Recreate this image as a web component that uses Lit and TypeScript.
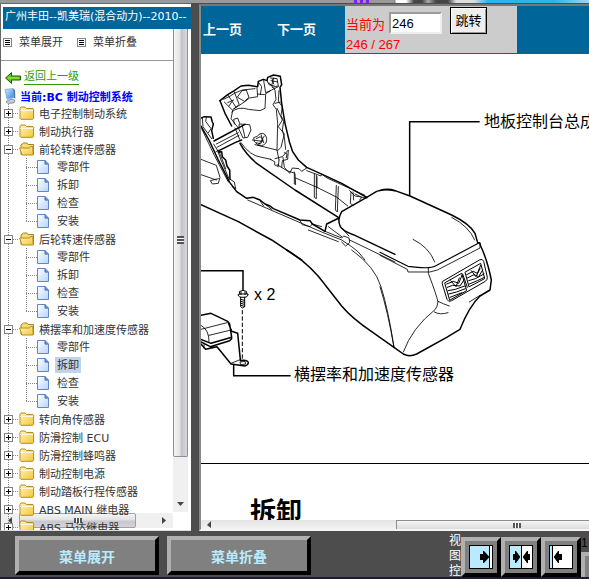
import { LitElement, html, svg, css, nothing } from "lit";
import { customElement, property, state } from "lit/decorators.js";
import { classMap } from "lit/directives/class-map.js";

interface Section {
  name: string;
  pages?: string[];
}

const PAGES = ["零部件", "拆卸", "检查", "安装"];

const SECTIONS: Section[] = [
  { name: "电子控制制动系统" },
  { name: "制动执行器" },
  { name: "前轮转速传感器", pages: PAGES },
  { name: "后轮转速传感器", pages: PAGES },
  { name: "横摆率和加速度传感器", pages: PAGES },
  { name: "转向角传感器" },
  { name: "防滑控制 ECU" },
  { name: "防滑控制蜂鸣器" },
  { name: "制动控制电源" },
  { name: "制动踏板行程传感器" },
  { name: "ABS MAIN 继电器" },
  { name: "ABS 马达继电器" },
];

const gradients = svg`
  <defs>
    <linearGradient id="gold" x1="0" y1="0" x2="1" y2="1">
      <stop offset="0" stop-color="#fff6b8" />
      <stop offset="1" stop-color="#f3c63c" />
    </linearGradient>
    <linearGradient id="sheet" x1="0" y1="0" x2="1" y2="1">
      <stop offset="0" stop-color="#ffffff" />
      <stop offset="1" stop-color="#b4d4fb" />
    </linearGradient>
    <linearGradient id="screen" x1="0" y1="0" x2="1" y2="1">
      <stop offset="0" stop-color="#cdeeff" />
      <stop offset="1" stop-color="#2f86e0" />
    </linearGradient>
  </defs>`;

const closedFolder = html`<svg class="folder" viewBox="0 0 16 14" aria-hidden="true">
  ${gradients}
  <path d="M1 12.5V2.5L2 1h4l1.5 1.5H14l.6.8v9.2l-.8.8H1.8z" fill="url(#gold)" stroke="#b98a1c" />
  <path d="M1.5 4.5h12.6" stroke="#fffbe0" />
</svg>`;

const openFolder = html`<svg class="folder" viewBox="0 0 16 14" aria-hidden="true">
  ${gradients}
  <path d="M2 12.5V3L4.5 1H8l1 1.5h5.5v10z" fill="#f7dc72" stroke="#a98322" />
  <path d="M3 13L.6 6h10l1-1.5h2.2L14.2 13z" fill="url(#gold)" stroke="#b98a1c" />
</svg>`;

const pageIcon = html`<svg class="sheet" viewBox="0 0 12 14" aria-hidden="true">
  ${gradients}
  <path d="M.5.5h7.6l3.4 3.4v9.6H.5z" fill="url(#sheet)" stroke="#6287c4" />
  <path d="M8 .5v3.6h3.5" fill="#6d96d8" stroke="#4a6eb0" />
</svg>`;

const consoleDrawing = html`<svg
  class="drawing"
  viewBox="201 54 600 409"
  role="img"
  aria-label="地板控制台总成 / 横摆率和加速度传感器"
>
  <g fill="none" stroke="#000" stroke-linejoin="round" stroke-linecap="round">
    <g transform="translate(195 60) scale(0.33333)">
      <g stroke-width="4.5">
        <path d="M75 122L98 104L118 92L138 78L160 76L188 80L190 64L205 58L216 62L218 52L236 45L256 49L260 74L255 82L260 130L270 190L283 245L293 275L310 300L335 322L390 347L440 370L515 412" />
        <path d="M75 122L90 160L110 198M135 250Q152 282 185 310L300 390L430 472" />
        <path d="M18 174L28 170L48 171L52 186L55 192L50 212L55 235M18 198L42 240L70 300L104 367L125 395L155 415" />
        <path d="M57 243L150 193M72 272L120 248L140 240" />
        <path d="M70 276L80 275L82 290L92 300L96 318L104 330L105 358" />
        <path d="M155 415L175 412L195 420L210 432L225 438L235 446L315 480L345 482L352 492L390 514" />
        <path d="M18 434L130 485L230 540L320 600" />
        <path d="M432 474L395 492L390 514M515 412L440 455Q426 480 436 500Q445 514 475 524L600 583" />
        <path d="M515 412L545 394Q565 386 600 392" />
      </g>
      <g stroke-width="2.5">
        <path d="M86 118L106 108L120 99L142 90L180 86M98 104L122 140M118 96L132 132M88 126L112 150M98 128L116 120M102 138L110 126" />
        <path d="M142 92L154 90L162 112L148 124L128 112ZM118 146L148 126L164 114L188 110L186 84M132 134L114 148L108 176L130 204" />
        <path d="M110 156Q130 138 160 148L195 152L210 145L212 104M188 102L208 104L230 90L250 80M190 66L200 80L196 104M206 62L212 98L226 92M216 62L222 74L238 78M226 54L246 56L250 78L232 82M232 58L236 72M228 62L248 66M236 54L230 76M222 68L240 90" />
        <path d="M240 92L243 118L234 134L244 148L248 190L246 270L252 300M252 92L250 124L262 140L258 166L266 184L262 210L268 232L272 268M240 130L256 126M246 145L262 180L250 200L268 222L258 262L248 272" />
        <path d="M134 192L164 194L168 210L158 232L144 234L132 208ZM120 204L134 238M64 252L130 218M66 262L132 226M142 198L150 232M118 192L116 178L128 174L134 190" />
        <path d="M188 228Q195 216 208 222Q220 234 212 250Q200 262 188 254Q174 246 176 234ZM184 236L196 230L204 240L196 252L184 248M198 224L206 248M172 240L202 244M180 254L245 270M208 228L190 256" />
        <path d="M138 248Q165 288 200 292L228 298M226 298L240 306L238 314L250 320M240 296L262 290L280 270L278 298L262 302L260 322M252 300L250 318M264 292L268 322L284 340L292 324L312 326L320 334L335 324M268 278L276 282L274 294" />
        <path d="M246 314L276 332L300 340L302 374L298 372L298 336M302 354L366 382L426 412L458 438M358 342V412L364 416V346M366 384V350M424 376L421 450L427 456L430 380M468 396L466 430L474 436M335 332L378 348L380 342L396 354L462 384L510 406M464 392L480 408L516 414M480 402L500 412L494 420M474 396L476 420" />
        <path d="M20 206L58 286L100 366M18 298L64 316L75 352L70 370L52 372L46 362L70 356M18 344L64 360M22 174L24 200L50 236M34 172L32 184L48 206L40 218M56 252L68 272L78 300L102 356M62 276L70 270L76 284L92 326" />
        <path d="M106 358L118 366L122 386L112 380M158 420L380 516L440 540L470 560Q490 572 510 600M390 514L440 534L446 528L462 534L464 548L452 558L440 546M352 492L380 500M315 482L322 494L345 500L352 492M196 424L206 438M212 434L230 448M440 504L462 528M464 540L600 606M400 500L440 530M340 510L430 545" />
      </g>
    </g>
    <g transform="translate(380 100) scale(0.33333)">
      <g stroke-width="4.5">
        <path d="M0 272Q22 264 45 272L90 288L215 345Q270 372 285 400L293 428L299 428L302 438Q322 480 334 540L330 570L300 588Q268 618 240 688L200 712L110 762Q88 772 70 762L42 742" />
        <path d="M0 457L84 499Q150 508 166 498L295 430" stroke-width="3.5" />
        <path d="M89 288V65H299" stroke-linecap="butt" stroke-linejoin="miter" />
      </g>
      <g stroke-width="2.5">
        <path d="M0 466L82 508L84 516H150L172 510L300 444V430M145 503V520Q170 586 174 606Q172 620 166 628Q96 684 70 756" />
        <path d="M215 352Q268 380 284 420M99 418Q148 442 164 486M174 604Q190 612 208 618M163 636Q180 646 204 638M268 606L300 586M0 560Q24 636 42 742" />
      </g>
      <g stroke-width="3">
        <path d="M188 544L300 479Q308 476 311 484L322 532Q322 540 316 544L215 602Q205 608 201 598L187 552ZM195 548L245 520L260 572L210 600ZM256 516L302 490L314 536L268 560Z" />
        <path d="M200 552L220 544L236 550L246 526M202 562L218 556L240 558L252 540M204 572L226 568L254 558M206 582L230 576L256 566M210 592L246 578M212 542L228 560L238 534M260 524L280 514L292 520L302 496M262 534L282 524L296 530L308 510M266 542L286 536L312 522M268 552L292 542L314 532M274 512L288 530L300 506M248 522L262 562" />
      </g>
    </g>
    <g transform="translate(195 250) scale(0.33333)">
      <g stroke-width="4.5">
        <path d="M275 0Q345 42 390 104L440 168Q470 204 530 245L597 292" />
        <path d="M18 62H144V120M116 342V377H287" stroke-linecap="butt" stroke-linejoin="miter" />
        <path d="M18 196L48 190L98 214L104 222L110 262L48 280L18 268M98 214L110 244L128 250L136 328M110 266L104 272L46 290L18 276M18 282L32 298L66 290L108 342L150 348Q164 342 158 334Q148 328 136 332" />
      </g>
      <g stroke-width="2.5">
        <path d="M18 238L96 218M18 226Q44 240 42 278M42 256L108 240M28 280L26 294M108 340L138 328M136 336L150 334L152 342L138 344Z" />
        <path d="M142 180V330" stroke-width="3" stroke-dasharray="13 6" stroke-linecap="butt" />
        <path d="M470 0Q540 50 558 110Q580 180 597 292" />
      </g>
      <g stroke-width="3" fill="#fff">
        <path d="M134 124Q144 118 154 124L156 132L160 134Q156 144 144 142Q130 142 129 134L133 132ZM137 142V170L142 174L149 170V142" />
        <path d="M138 126V134M150 126V134M133 132H156M137 148L149 151M137 154L149 157M137 160L149 163M137 166L149 169" fill="none" />
      </g>
    </g>
  </g>
  <text class="latin" x="254" y="300">x 2</text>
  <text class="label" x="484" y="127">地板控制台总成</text>
  <text class="label" x="294" y="380">横摆率和加速度传感器</text>
</svg>`;

@customElement("menu-tree")
export class MenuTree extends LitElement {
  @property({ attribute: false }) sections: Section[] = [];
  @state() private selected = "4-1";

  static styles = css`
    :host {
      display: block;
    }
    ul {
      list-style: none;
      margin: 0;
      padding: 0;
    }
    .tree {
      padding-left: 3px;
      background: repeating-linear-gradient(#888 0 1px, transparent 1px 2px) 7px 0 / 1px 100% no-repeat;
    }
    .row {
      display: flex;
      align-items: center;
      height: 18px;
    }
    .toggle {
      box-sizing: border-box;
      width: 9px;
      height: 9px;
      padding: 0;
      border: 1px solid #848484;
      background: #fff;
      display: block;
    }
    .toggle svg {
      display: block;
      width: 7px;
      height: 7px;
    }
    .dots {
      width: 6px;
      height: 1px;
      background: repeating-linear-gradient(90deg, #888 0 1px, transparent 1px 2px);
    }
    .folder {
      width: 16px;
      height: 14px;
      margin-right: 4px;
    }
    .sheet {
      width: 12px;
      height: 14px;
      margin-right: 6px;
    }
    .children {
      padding-left: 22px;
    }
    .child {
      background: repeating-linear-gradient(#888 0 1px, transparent 1px 2px) 0 0 / 1px 100% no-repeat;
    }
    .child:last-child {
      background-size: 1px 9px;
    }
    .child .dots {
      width: 11px;
    }
    a {
      color: #333;
      text-decoration: none;
      white-space: nowrap;
      line-height: 15px;
      padding-top: 2px;
    }
    .child a {
      padding: 2px 2px 0;
      line-height: 14px;
    }
    .selected {
      background: #c1d2ee;
    }
  `;

  private renderPage(page: string, key: string) {
    return html`<li class="row child">
      <span class="dots"></span>${pageIcon}
      <a
        href="#${key}"
        class=${classMap({ selected: this.selected === key })}
        @click=${() => (this.selected = key)}
        >${page}</a
      >
    </li>`;
  }

  render() {
    return html`<ul class="tree">
      ${this.sections.map(
        (s, i) => html`<li>
          <div class="row">
            <button class="toggle" aria-label=${s.name} aria-expanded=${s.pages ? "true" : "false"}>
              <svg viewBox="0 0 7 7">
                <path d=${s.pages ? "M1 3.5h5" : "M1 3.5h5M3.5 1v5"} stroke="#000" />
              </svg>
            </button>
            <span class="dots"></span>
            ${s.pages ? openFolder : closedFolder}
            <a href="#${i}">${s.name}</a>
          </div>
          ${s.pages
            ? html`<ul class="children">
                ${s.pages.map((p, j) => this.renderPage(p, `${i}-${j}`))}
              </ul>`
            : nothing}
        </li>`
      )}
    </ul>`;
  }
}

@customElement("app-root")
export class AppRoot extends LitElement {
  static styles = css`
    :host {
      display: grid;
      grid-template-columns: 191px 8px minmax(0, 1fr);
      grid-template-rows: 3px minmax(0, 1fr) 48px;
      height: 100vh;
      overflow: hidden;
      background: #4d4d4d;
      font: 11px "DejaVu Sans", "Noto Sans CJK SC", sans-serif;
      color: #333;
    }
    button,
    input {
      font-family: inherit;
      margin: 0;
    }
    .strip {
      grid-column: 1 / -1;
      display: flex;
      background: #999;
    }
    .strip .purple {
      width: 18px;
      margin-left: 354px;
      background: repeating-linear-gradient(90deg, #8a1cf0 0 3px, #999 3px 6px);
    }
    .strip .photo {
      flex: 1;
      margin-left: 22px;
      background: linear-gradient(90deg, #888 0 1px, #fff 2px 12px, #444 20px 28px, #aaa 34px, #444 42px 54px, #ddd 62px 80px, #2cb4e6 94px 160px, #9bd8ee);
    }

    .side {
      display: flex;
      flex-direction: column;
      min-height: 0;
      box-sizing: border-box;
      border-top: 1px solid #666;
      border-left: 1px solid #666;
      border-bottom: 1px solid #ddd;
      background: #fff;
    }
    .title {
      margin: 3px 0 0 2px;
      padding-left: 2px;
      height: 22px;
      line-height: 20px;
      background: #069;
      color: #fff;
      font-size: 11px;
      font-weight: 400;
      white-space: nowrap;
      overflow: hidden;
    }
    .side-body {
      flex: 1;
      min-height: 0;
      display: grid;
      grid-template-columns: minmax(0, 1fr) 15px;
      padding-right: 3px;
    }
    .menu {
      position: relative;
      isolation: isolate;
      min-height: 0;
      overflow: hidden;
    }
    .tools {
      display: flex;
      gap: 14px;
      height: 32px;
      border-bottom: 1px solid #999;
      box-sizing: border-box;
      padding-left: 2px;
    }
    .tool {
      display: flex;
      align-items: center;
      gap: 7px;
      height: 26px;
      padding: 0;
      border: 0;
      background: none;
      font-size: 11px;
      color: #333;
    }
    .tool svg {
      width: 9px;
      height: 9px;
      margin-top: 1px;
    }
    .tool span {
      margin-top: -2px;
    }
    .back {
      display: flex;
      align-items: center;
      gap: 3px;
      height: 20px;
      padding: 6px 0 0 4px;
    }
    .back a {
      color: #390;
      text-decoration: none;
      border-bottom: 1px solid #390;
      line-height: 14px;
    }
    .back svg {
      width: 16px;
      height: 12px;
      margin-top: 2px;
    }
    .current {
      display: flex;
      align-items: center;
      gap: 4px;
      height: 17px;
      padding-left: 3px;
      color: #00f;
      font-weight: 700;
      white-space: nowrap;
    }
    .current svg {
      width: 12px;
      height: 16px;
    }
    .hbar {
      position: absolute;
      z-index: -1;
      left: 0;
      right: 0;
      bottom: 2px;
      height: 15px;
      display: grid;
      grid-template-columns: 18px 117px 1fr 18px;
      align-items: center;
      justify-items: center;
      background: #f0f0f0;
    }
    .hthumb {
      box-sizing: border-box;
      width: 100%;
      height: 100%;
      border: 1px solid #a0a0a0;
      border-radius: 2px;
      background: linear-gradient(#f5f5f5, #e2e2e4 45%, #c8c8cc 55%, #d4d4d8);
      display: flex;
      align-items: center;
      justify-content: center;
    }
    .hbar .right {
      grid-column: 4;
    }
    .arrow {
      width: 6px;
      height: 7px;
      fill: #444;
    }
    .vbar {
      display: flex;
      flex-direction: column;
      margin-bottom: 18px;
      align-items: center;
      background: #f0f0f0;
    }
    .vthumb {
      box-sizing: border-box;
      flex: 1;
      width: 100%;
      border: 1px solid #8e8e8e;
      border-top: 0;
      border-radius: 0 0 2px 2px;
      background: linear-gradient(90deg, #f5f5f5, #e4e4e6 45%, #c4c4c8 55%, #d8d8dc);
      display: flex;
      align-items: center;
      justify-content: center;
    }
    .vtrack {
      height: 55px;
      display: flex;
      align-items: end;
    }
    .vtrack svg {
      width: 7px;
      height: 4px;
      margin-bottom: 6px;
      fill: #444;
    }
    .grip {
      width: 8px;
      height: 8px;
      background: repeating-linear-gradient(90deg, #555 0 2px, #fff 2px 3px);
    }
    .hthumb .grip,
    .page-thumb .grip {
      height: 5px;
    }
    .vthumb .grip {
      width: 7px;
      margin-top: -6px;
      background: repeating-linear-gradient(#555 0 2px, #fff 2px 3px);
    }

    .view {
      grid-column: 3;
      display: flex;
      flex-direction: column;
      min-height: 0;
      border-top: 2px solid #777;
      border-left: 2px solid #888;
      border-bottom: 2px solid #f4f4f4;
      background: #fff;
      margin-top: 1px;
    }
    .bar {
      display: flex;
      align-items: stretch;
      flex: none;
      height: 48px;
      background: #069;
      font: 13px "Liberation Sans", "Noto Sans CJK SC", sans-serif;
    }
    .links {
      width: 144px;
      display: flex;
      align-items: center;
      gap: 35px;
      box-sizing: border-box;
      padding-left: 2px;
      padding-bottom: 4px;
      font-weight: 700;
    }
    .links a {
      color: #fff;
      text-decoration: none;
    }
    .jump {
      width: 172px;
      height: 47px;
      box-sizing: border-box;
      padding: 1px 1px 0;
      background: #ccc;
      color: red;
    }
    .jump-row {
      display: flex;
      align-items: flex-start;
      height: 28px;
    }
    .jump label {
      padding-top: 8px;
      line-height: 20px;
      width: 43px;
    }
    .jump input {
      box-sizing: border-box;
      width: 53px;
      height: 22px;
      margin-top: 5px;
      padding: 0 1px;
      border: 2px inset #eee;
      background: #fff;
      color: #000;
      font-size: 13px;
    }
    .jump button {
      box-sizing: border-box;
      width: 37px;
      height: 27px;
      margin-left: 8px;
      padding: 0 0 2px;
      border: 1px solid #000;
      box-shadow: inset 1px 1px #fff, inset -1px -1px #999;
      background: #eee;
      color: #000;
      font-size: 13px;
    }
    .count {
      line-height: 20px;
    }
    .page {
      flex: 1;
      min-height: 0;
      overflow: hidden;
    }
    .drawing {
      display: block;
      width: 600px;
      height: 409px;
      border-bottom: 1px solid #000;
    }
    .label {
      font: 16px "Liberation Serif", "Noto Sans CJK SC", serif;
    }
    .latin {
      font: 16px "Liberation Sans", sans-serif;
    }
    h2 {
      margin: 30px 0 0 49px;
      font: 700 26px/36px "Liberation Sans", "Noto Sans CJK SC", sans-serif;
      color: #000;
    }
    .page-bar {
      flex: none;
      height: 9px;
      display: grid;
      grid-template-columns: 195px 1fr;
      align-items: center;
      background: linear-gradient(#e4e4e4, #f2f2f2);
    }
    .page-bar .arrow {
      margin-left: 5px;
    }
    .page-thumb {
      box-sizing: border-box;
      height: 9px;
      margin-right: -48px;
      border: 1px solid #8e8e8e;
      border-bottom: 0;
      background: linear-gradient(#f5f5f5, #dcdcde);
      display: flex;
      align-items: center;
      justify-content: center;
    }

    .foot {
      grid-column: 1 / -1;
      display: flex;
      align-items: flex-start;
      box-sizing: border-box;
      padding: 5px 0 0 15px;
      border-bottom: 2px solid #1c1c2c;
      overflow: hidden;
    }
    .foot button {
      box-sizing: border-box;
      flex: none;
      border: 4px solid;
      border-color: #b0b0b0 #000 #000 #b0b0b0;
      background: #808080;
      padding: 0;
    }
    .foot .big {
      width: 144px;
      height: 39px;
      margin-right: 8px;
      color: #b8ebff;
      font: 700 14px "Noto Sans CJK SC", sans-serif;
    }
    .caption {
      width: 12px;
      margin: -2px 0 0 auto;
      color: #fff;
      font-size: 12px;
      line-height: 15px;
    }
    .foot .icon {
      width: 40px;
      height: 40px;
      margin-top: 1px;
      display: grid;
      place-items: center;
    }
    .icon svg {
      width: 24px;
      height: 24px;
    }
    .more {
      width: 8px;
      overflow: hidden;
      color: #000;
      font: 12px/14px "Liberation Sans", sans-serif;
    }
    .foot .more button {
      display: block;
      width: 40px;
      height: 40px;
      margin-top: 2px;
    }
  `;

  private tool(name: string) {
    return html`<button class="tool">
      <svg viewBox="0 0 9 9" aria-hidden="true">
        <rect x=".5" y=".5" width="8" height="8" fill="#fff" stroke="#848484" />
        <path d="M2 2.5h5M2 4.5h5M2 6.5h5" stroke="#000" />
      </svg>
      <span>${name}</span>
    </button>`;
  }

  private viewButton(name: string, split: number, arrows: string) {
    return html`<button class="icon" aria-label=${name}>
      <svg viewBox="0 0 24 24" aria-hidden="true">
        <rect x=".5" y=".5" width="23" height="23" fill="#fff" />
        <rect x=".5" y=".5" width=${split} height="23" fill="#b8ebff" />
        <path d="M${split + 0.5} 0V24" stroke="#000" />
        <rect x=".5" y=".5" width="23" height="23" fill="none" stroke="#000" />
        <path d=${arrows} fill="#000" />
      </svg>
    </button>`;
  }

  render() {
    return html`
      <div class="strip"><span class="purple"></span><span class="photo"></span></div>
      <nav class="side">
        <h1 class="title">广州丰田--凯美瑞(混合动力)--2010--</h1>
        <div class="side-body">
          <div class="menu">
            <div class="tools">${this.tool("菜单展开")}${this.tool("菜单折叠")}</div>
            <div class="back">
              <svg viewBox="0 0 16 12" aria-hidden="true">
                <path d="M.6 6L6.5.6V4h9v4h-9v3.4z" fill="#5fc81e" stroke="#1c5c08" />
                <path d="M3 6h11" stroke="#b4f03c" />
              </svg>
              <a href="#up">返回上一级</a>
            </div>
            <div class="current">
              <svg viewBox="0 0 12 16" aria-hidden="true">
                ${gradients}
                <path d="M1 1.5L9 .6l1 9L3 11z" fill="url(#screen)" stroke="#8fb0d8" />
                <path d="M9 .6l2 1.4.4 8.4-1.6-.4z" fill="#5478b0" />
                <path d="M3.4 12.4l5-1.4 2.6 1.6-1 2.2-5.4.6-2.4-1.4z" fill="#c4ccd8" stroke="#8890a4" />
              </svg>
              <span>当前:BC 制动控制系统</span>
            </div>
            <menu-tree .sections=${SECTIONS}></menu-tree>
            <div class="hbar">
              <svg class="arrow" viewBox="0 0 6 7"><path d="M5 0v7L1 3.5z" /></svg>
              <div class="hthumb"><span class="grip"></span></div>
              <svg class="arrow right" viewBox="0 0 6 7"><path d="M1 0v7l4-3.5z" /></svg>
            </div>
          </div>
          <div class="vbar">
            <div class="vthumb"><span class="grip"></span></div>
            <div class="vtrack"><svg viewBox="0 0 7 4"><path d="M0 0h7L3.5 4z" /></svg></div>
          </div>
        </div>
      </nav>
      <main class="view">
        <div class="bar">
          <div class="links"><a href="#prev">上一页</a><a href="#next">下一页</a></div>
          <form class="jump" @submit=${(e: Event) => e.preventDefault()}>
            <div class="jump-row">
              <label for="page">当前为</label>
              <input id="page" type="text" value="246" />
              <button type="submit">跳转</button>
            </div>
            <div class="count">246 / 267</div>
          </form>
        </div>
        <div class="page">
          ${consoleDrawing}
          <h2>拆卸</h2>
        </div>
        <div class="page-bar">
          <svg class="arrow" viewBox="0 0 6 7"><path d="M5 0v7L1 4z" /></svg>
          <div class="page-thumb"><span class="grip"></span></div>
        </div>
      </main>
      <footer class="foot">
        <button class="big">菜单展开</button>
        <button class="big">菜单折叠</button>
        <div class="caption">视图控</div>
        ${this.viewButton("左侧展开", 20, "M11 9h3V6h1l5 5.5v1L15 18h-1v-3h-3z")}
        ${this.viewButton("左右均分", 12, "M4 9h2V6h1l4 5.5v1L7 18H6v-3H4zM21 9h-2V6h-1l-4 5.5v1l4 5.5h1v-3h2z")}
        ${this.viewButton("右侧展开", 3, "M13 9h-3V6H9l-4 5.5v1L9 18h1v-3h3z")}
        <div class="more">1<button aria-label="更多"></button></div>
      </footer>
    `;
  }
}
